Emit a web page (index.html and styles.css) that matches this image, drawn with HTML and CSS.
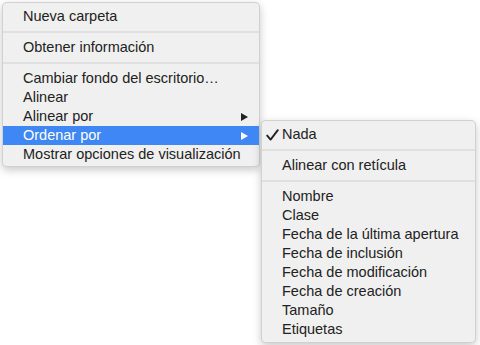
FILE: index.html
```html
<!DOCTYPE html>
<html lang="es">
<head>
    <meta charset="UTF-8">
    <title>Menú contextual</title>
    <link rel="stylesheet" href="styles.css">
</head>
<body>
    <div class="desktop">

        <ul class="menu main-menu">
            <li class="item">Nueva carpeta</li>
            <li class="sep"></li>
            <li class="item">Obtener información</li>
            <li class="sep"></li>
            <li class="item">Cambiar fondo del escritorio…</li>
            <li class="item">Alinear</li>
            <li class="item has-sub">Alinear por <span class="arrow"></span></li>
            <li class="item has-sub active">Ordenar por <span class="arrow"></span></li>
            <li class="item">Mostrar opciones de visualización</li>
        </ul>

        <ul class="menu sub-menu">
            <li class="item checked">
                <svg class="check" width="13" height="12" viewBox="0 0 13 12">
                    <path d="M1.2 6.6 L4.6 10.6 L11.8 1.2" fill="none" stroke="#222" stroke-width="1.9" stroke-linecap="round" stroke-linejoin="round"/>
                </svg>
                Nada
            </li>
            <li class="sep"></li>
            <li class="item">Alinear con retícula</li>
            <li class="sep"></li>
            <li class="item">Nombre</li>
            <li class="item">Clase</li>
            <li class="item">Fecha de la última apertura</li>
            <li class="item">Fecha de inclusión</li>
            <li class="item">Fecha de modificación</li>
            <li class="item">Fecha de creación</li>
            <li class="item">Tamaño</li>
            <li class="item">Etiquetas</li>
        </ul>

    </div>
</body>
</html>
```

FILE: styles.css
```css
body {
    margin: 0;
    background-color: #ffffff;
    font-family: "Liberation Sans", Arial, sans-serif;
    font-size: 14.5px;
    color: #222222;
}
.desktop {
    display: flex;
    align-items: flex-start;
    padding: 2px;
}
.menu {
    list-style: none;
    margin: 0;
    padding: 4px 0;
    background-color: #f0f0f0;
    border: 1px solid rgba(0, 0, 0, 0.13);
    border-radius: 5px;
    box-shadow: 0 3px 9px rgba(0, 0, 0, 0.22);
    box-sizing: border-box;
}
.main-menu {
    width: 258px;
    height: 165px;
}
.sub-menu {
    width: 215px;
    height: 223px;
    margin-top: 118px;
    margin-left: 1px;
}
.item {
    display: flex;
    align-items: center;
    height: 19px;
    padding-left: 20px;
    padding-right: 11px;
    position: relative;
    white-space: nowrap;
    line-height: 17px;
}
.item.active {
    background-color: #3f87f5;
    color: #ffffff;
}
.sep {
    height: 12px;
    display: flex;
    align-items: center;
}
.sep::before {
    content: "";
    flex: 1;
    height: 2px;
    background-color: #e0e0e0;
}
.arrow {
    margin-left: auto;
    width: 0;
    height: 0;
    border-top: 4px solid transparent;
    border-bottom: 4px solid transparent;
    border-left: 7px solid #222222;
}
.active .arrow {
    border-left-color: #ffffff;
}
.check {
    position: absolute;
    left: 4px;
    top: 4px;
}
```
